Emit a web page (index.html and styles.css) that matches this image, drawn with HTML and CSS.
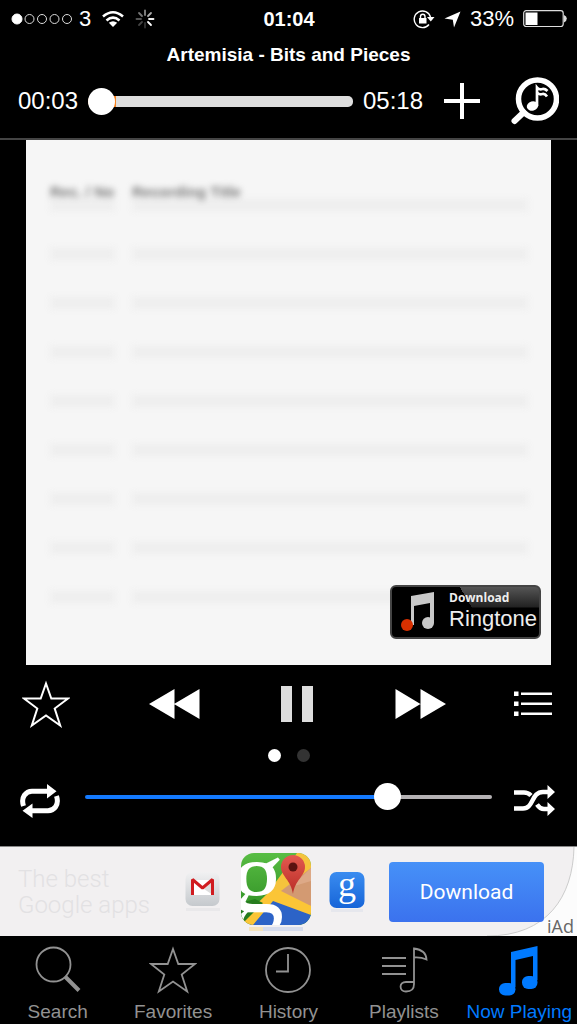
FILE: index.html
```html
<!DOCTYPE html>
<html lang="en">
<head>
    <meta charset="UTF-8">
    <meta name="viewport" content="width=device-width, initial-scale=1.0">
    <title>Now Playing</title>
    <link rel="stylesheet" href="styles.css">
</head>
<body>
    <div class="status">
        <div class="status-left">
            <svg width="62" height="12" viewBox="0 0 62 12" fill="none" stroke="#ddd">
                <circle cx="6" cy="6" r="5" fill="#fff" stroke="#fff"/>
                <circle cx="18.500" cy="6" r="4.500"/>
                <circle cx="31" cy="6" r="4.500"/>
                <circle cx="43.500" cy="6" r="4.500"/>
                <circle cx="56" cy="6" r="4.500"/>
            </svg>
            <span>3</span>
            <svg class="wifi" width="24" height="18" viewBox="0 0 24 18" fill="none" stroke="#fff" stroke-width="2.600">
                <path d="M2 6.500Q12-2 22 6.500M5.500 10.500Q12 4.800 18.500 10.500"/>
                <path d="M12 17L7.800 12.800Q12 9.600 16.200 12.800Z" fill="#fff" stroke="none"/>
            </svg>
            <svg width="20" height="20" viewBox="0 0 20 20" stroke-width="1.800" stroke-linecap="round">
                <path d="M10 6V1.500" stroke="#888"/>
                <path d="M13 7L16 4" stroke="#aaa"/>
                <path d="M14 10H18.500" stroke="#eee"/>
                <path d="M13 13L16 16" stroke="#fff"/>
                <path d="M10 14V18.500" stroke="#333"/>
                <path d="M7 13L4 16" stroke="#444"/>
                <path d="M6 10H1.500" stroke="#555"/>
                <path d="M7 7L4 4" stroke="#777"/>
            </svg>
        </div>
        <div class="clock">01:04</div>
        <div class="status-right">
            <svg width="22" height="20" viewBox="0 0 22 20" fill="none" stroke="#fff" stroke-width="1.400">
                <path d="M16 15.500A8.300 8.300 0 1 1 17.500 8"/>
                <path d="M14 8H21.500L17.800 12.500Z" fill="#fff" stroke="none"/>
                <rect x="6" y="9" width="7.500" height="5.500" fill="#fff" stroke="none"/>
                <path d="M7.500 9V7.500A2.200 2.200 0 0 1 12 7.500V9"/>
            </svg>
            <svg width="17" height="17" viewBox="0 0 17 17" fill="#fff"><path d="M16.500 0.500L10 16.500L8.800 8.700L0.500 7.500Z"/></svg>
            <span>33%</span>
            <svg width="44" height="18" viewBox="0 0 44 18" fill="none">
                <rect x="0.700" y="0.700" width="39.500" height="15.800" rx="2.500" stroke="#ddd" stroke-width="1.200"/>
                <path d="M2.500 2.500H14.500V15H2.500Z" fill="#fff"/>
                <path d="M41 5Q43.800 6 43.800 8.600Q43.800 11.500 41 12.500Z" fill="#ddd"/>
            </svg>
        </div>
    </div>

    <header>
        <h1>Artemisia - Bits and Pieces</h1>
        <div class="seek">
            <label for="seek">00:03</label>
            <input type="range" id="seek" min="0" max="318" value="0">
            <span>05:18</span>
            <button class="add" aria-label="Add to playlist">
                <svg width="36" height="36" viewBox="0 0 36 36" stroke="#fff" stroke-width="4"><path d="M0 18H36M18 0V36"/></svg>
            </button>
            <button class="find" aria-label="Find music">
                <svg width="48" height="48" viewBox="0 0 48 48" fill="none" stroke="#fff">
                    <circle cx="26.500" cy="22" r="19" stroke-width="5.500"/>
                    <path d="M12.500 35.500L3.500 44" stroke-width="6" stroke-linecap="round"/>
                    <ellipse cx="21.500" cy="29" rx="5.800" ry="4.600" fill="#fff" stroke="none" transform="rotate(-15 21.500 29)"/>
                    <path d="M26 29V10.500Q28 13 31.500 12Q34 11.500 36.500 14" stroke-width="2.700"/>
                    <path d="M26 15.500Q28 18 31.500 17Q34 16.500 36 19.500" stroke-width="2.700"/>
                </svg>
            </button>
        </div>
    </header>

    <main>
        <div class="artwork">
            <table>
                <tr><th>Rec. / No</th><th>Recording Title</th></tr>
                <tr><td></td><td></td></tr>
                <tr><td></td><td></td></tr>
                <tr><td></td><td></td></tr>
                <tr><td></td><td></td></tr>
                <tr><td></td><td></td></tr>
                <tr><td></td><td></td></tr>
                <tr><td></td><td></td></tr>
                <tr><td></td><td></td></tr>
            </table>
            <a href="#" class="ringtone">
                <svg width="36" height="40" viewBox="0 0 36 40" fill="#c8c8c8">
                    <path d="M11 4L34 0V31H30V11L14 14V33H11Z"/>
                    <circle cx="28" cy="31" r="6"/>
                    <circle cx="7" cy="33" r="6" fill="#d83000"/>
                </svg>
                <span class="ringtone-text"><small>Download</small><b>Ringtone</b></span>
            </a>
        </div>

        <div class="controls">
            <button aria-label="Favorite">
                <svg width="48" height="48" viewBox="0 0 48 48" fill="none" stroke="#fff" stroke-width="2"><path d="M24 3.500L29.300 18.500H46L32.700 28.500L38.200 45.500L24 35.500L9.800 45.500L15.300 28.500L2 18.500H18.700Z"/></svg>
            </button>
            <button aria-label="Previous">
                <svg width="51" height="32" viewBox="0 0 51 32" fill="#fff"><path d="M0 16L25.500 1V31ZM25 16L50.500 1V31Z"/></svg>
            </button>
            <button aria-label="Pause">
                <svg width="32" height="36" viewBox="0 0 32 36" fill="#ddd"><path d="M0 0H11V36H0ZM21 0H32V36H21Z"/></svg>
            </button>
            <button aria-label="Next">
                <svg width="51" height="32" viewBox="0 0 51 32" fill="#fff"><path d="M0.500 1L25.500 16L0.500 31ZM25.500 1L51 16L25.500 31Z"/></svg>
            </button>
            <button aria-label="Track list">
                <svg width="38" height="26" viewBox="0 0 38 26" fill="#fff"><path d="M0 0.500H4.500V5H0ZM0 10.500H4.500V15H0ZM0 20.500H4.500V25H0ZM7 1.500H38V4H7ZM7 11.500H38V14H7ZM7 21.500H38V24H7Z"/></svg>
            </button>
        </div>

        <div class="pages"><i class="on"></i><i></i></div>

        <div class="volume">
            <button aria-label="Repeat">
                <svg width="40" height="34" viewBox="0 0 40 34" fill="none" stroke="#fff" stroke-width="5">
                    <path d="M3.500 22C0.500 13 6 7.200 12 7.200H28"/>
                    <path d="M36.500 12C39.500 21 34 26.800 28 26.800H12"/>
                    <path d="M27 0L36.500 7.200L27 14.500ZM12.500 19.500L2.500 26.800L12.500 34Z" fill="#fff" stroke="none"/>
                </svg>
            </button>
            <input type="range" id="volume" aria-label="Volume" min="0" max="100" value="76">
            <button aria-label="Shuffle">
                <svg width="41" height="32" viewBox="0 0 41 32" fill="none" stroke="#fff" stroke-width="4.500">
                    <path d="M0 7.500H10Q14 7.500 17 10.500M23 19.500Q26 24 30 24H34"/>
                    <path d="M0 23.500H9C20 23.500 17 7 29 7H34"/>
                    <path d="M33.500 0L41 7L33.500 14ZM33.500 17L41 24L33.500 31Z" fill="#fff" stroke="none"/>
                </svg>
            </button>
        </div>
    </main>

    <section class="ad">
        <p>The best<br>Google apps</p>
        <svg class="gmail" width="36" height="42" viewBox="0 0 36 42">
            <defs>
                <linearGradient id="silver" x2="0" y2="1"><stop stop-color="#f1f1f2"/><stop offset="1" stop-color="#c5c9cd"/></linearGradient>
            </defs>
            <rect x="1" y="37" width="34" height="3" fill="#e9e8ea"/>
            <rect x="0.500" y="1" width="34" height="34" rx="7" fill="url(#silver)"/>
            <path d="M7 9H28V24H7Z" fill="#fff"/>
            <path d="M19 18L28 10V24Z" fill="#ddd"/>
            <path d="M7.500 24V8.500L17.500 17L27.500 8.500V24" fill="none" stroke="#d01c20" stroke-width="3" stroke-linejoin="bevel"/>
        </svg>
        <svg class="maps" width="70" height="78" viewBox="0 0 70 78">
            <defs>
                <clipPath id="tile"><rect width="70" height="72" rx="13"/></clipPath>
                <linearGradient id="green" x2="0" y2="1"><stop stop-color="#58bd43"/><stop offset="1" stop-color="#27851e"/></linearGradient>
                <linearGradient id="pin" x2="0" y2="1"><stop stop-color="#e35a50"/><stop offset="1" stop-color="#b92c26"/></linearGradient>
            </defs>
            <path d="M8 74H22V78H8Z" fill="#f5e4bd"/>
            <path d="M22 74H62V78H22Z" fill="#d6dced"/>
            <g clip-path="url(#tile)">
                <rect width="70" height="72" fill="url(#green)"/>
                <path d="M56 0H70V60L26 41Z" fill="#f5c33c"/>
                <path d="M70 15V53L36 41Z" fill="#d39a72"/>
                <path d="M70 15V28L50 34Z" fill="#dda987"/>
                <path d="M6 72L36 44L70 62V72Z" fill="#2c63c7"/>
                <path d="M26 41L36 36L70 53V62L32 48L12 72H0V66Z" fill="#fbc536"/>
                <path d="M0 50L14 46L22 50L2 70H0Z" fill="#267c1e"/>
                <text x="-10" y="59" class="g big">g</text>
            </g>
            <path d="M52 41C50 27 40 23 40 14A12 12 0 0 1 64 14C64 23 54 27 52 41Z" fill="url(#pin)"/>
            <circle cx="52" cy="14" r="4.500" fill="#5b1210"/>
        </svg>
        <svg class="google" width="36" height="42" viewBox="0 0 36 42">
            <defs>
                <linearGradient id="blue" x2="0" y2="1"><stop stop-color="#3a8cf0"/><stop offset="1" stop-color="#1765d8"/></linearGradient>
            </defs>
            <rect x="2" y="38" width="32" height="3" fill="#e6e7ed"/>
            <rect x="0.500" y="1" width="35" height="36" rx="7" fill="url(#blue)"/>
            <text x="9" y="25" class="g">g</text>
        </svg>
        <button class="download">Download</button>
        <svg class="curl" width="90" height="89" viewBox="0 0 90 89"><path d="M90 0V89H0C60 89 86 50 87 0Z" fill="#fcfcfc"/><path d="M0 89C60 89 86 50 87 0" fill="none" stroke="#ccc"/></svg>
        <span class="iad">iAd</span>
    </section>

    <nav>
        <a href="#">
            <svg width="48" height="50" viewBox="0 0 48 50" fill="none" stroke="#929292" stroke-width="1.800">
                <circle cx="19.500" cy="18.500" r="17"/>
                <path d="M31 30.500L45 44.500" stroke-width="4"/>
            </svg>
            Search
        </a>
        <a href="#">
            <svg width="48" height="50" viewBox="0 0 48 50" fill="none" stroke="#929292" stroke-width="1.800"><path d="M24 3L29.300 18H46L32.700 28.500L38.200 45.500L24 35.500L9.800 45.500L15.300 28.500L2 18H18.700Z"/></svg>
            Favorites
        </a>
        <a href="#">
            <svg width="48" height="50" viewBox="0 0 48 50" fill="none" stroke="#929292" stroke-width="1.800">
                <circle cx="24" cy="24" r="22"/>
                <path d="M24 8V25.500H12"/>
            </svg>
            History
        </a>
        <a href="#">
            <svg width="48" height="50" viewBox="0 0 48 50" fill="none" stroke="#929292" stroke-width="1.800">
                <path d="M2 12H26M2 20H26M2 28H26"/>
                <path d="M34 36H26C18.500 36 19 45.500 26 45.500C31 45.500 34 44 34 38V2.500Q46 4 46.500 13.500Q41 11 34 11.500"/>
            </svg>
            Playlists
        </a>
        <a href="#" class="active">
            <svg width="48" height="50" viewBox="0 0 48 50" fill="#007aff">
                <path d="M16 6L42.500 0V34H38V10L20.500 14V41H16Z"/>
                <rect x="4" y="37" width="16.500" height="12.500" rx="6.200"/>
                <rect x="27" y="30" width="15.500" height="13" rx="6.200"/>
            </svg>
            Now Playing
        </a>
    </nav>
</body>
</html>
```
FILE: styles.css
```css
* {
    box-sizing: border-box;
}

body {
    margin: 0;
    background-color: #000;
    color: #fff;
    font-family: "Liberation Sans", Arial, sans-serif;
}

svg {
    display: block;
    flex: none;
}

button {
    padding: 0;
    border: none;
    background: none;
    color: inherit;
    cursor: pointer;
}

a {
    text-decoration: none;
}

/* Status bar */
.status {
    display: grid;
    grid-template-columns: 1fr auto 1fr;
    align-items: center;
    height: 38px;
    padding: 0 10px 0 11px;
    font-size: 22px;
}

.status-left,
.status-right {
    display: flex;
    align-items: center;
}

.status-left {
    gap: 10px;
}

.status-left span {
    margin-left: -4px;
}

.status-right {
    justify-content: flex-end;
    gap: 9px;
}

.clock {
    font-size: 20px;
    font-weight: bold;
}

/* Song title and seek bar */
header {
    border-bottom: 2px solid #444;
}

h1 {
    margin: 0;
    font-size: 19px;
    line-height: 34px;
    text-align: center;
}

.seek {
    display: flex;
    align-items: center;
    height: 66px;
    padding: 0 18px 8px;
    font-size: 24px;
}

.seek input {
    flex: 1;
    margin: 0 10px;
}

.add {
    margin: 0 31px 0 21px;
}

/* Sliders */
input[type="range"] {
    appearance: none;
    min-width: 0;
    height: 28px;
    background: none;
}

input::-webkit-slider-runnable-track {
    height: 4px;
    border-radius: 2px;
    background: linear-gradient(to right, #147aff 75%, #b5b2b4 75%);
}

input::-webkit-slider-thumb {
    appearance: none;
    width: 27px;
    height: 27px;
    margin-top: -12px;
    border-radius: 50%;
    background-color: #fff;
}

#seek::-webkit-slider-runnable-track {
    height: 11px;
    border-radius: 5px;
    background: linear-gradient(to right, #f58220 28px, #dedede 28px);
}

#seek::-webkit-slider-thumb {
    margin-top: -8px;
}

/* Artwork */
.artwork {
    position: relative;
    margin: 0 26px;
    padding: 22px 6px 0 7px;
    aspect-ratio: 1;
    background-color: #f6f6f6;
}

.artwork table {
    width: 100%;
    table-layout: fixed;
    border-spacing: 17px 0;
    filter: blur(3px);
}

.artwork th,
.artwork td {
    height: 49px;
    padding: 0;
    border-bottom: 12px solid #eee;
}

.artwork th {
    color: #777;
    font-size: 15px;
    line-height: 14px;
    text-align: left;
    vertical-align: bottom;
    white-space: nowrap;
}

.artwork th:first-child {
    width: 65px;
}

.ringtone {
    position: absolute;
    right: 10px;
    bottom: 26px;
    display: flex;
    align-items: center;
    gap: 13px;
    width: 151px;
    height: 54px;
    padding-left: 8px;
    border: 2px solid #444;
    border-radius: 6px;
    background: linear-gradient(60deg, #000 55%, transparent 55%), linear-gradient(#555, #222 40%, #000 42%);
    color: #eee;
}

.ringtone-text small {
    display: block;
    font: bold 12px/14px "Open Sans", sans-serif;
}

.ringtone-text b {
    display: block;
    font: 22px/28px "Liberation Sans Narrow", "Liberation Sans", sans-serif;
}

/* Playback buttons */
.controls {
    display: grid;
    grid-template-columns: 92fr 165fr 80fr 167fr 58fr;
    align-items: center;
    justify-items: center;
    height: 78px;
    padding-right: 15px;
}

.pages {
    display: flex;
    justify-content: center;
    gap: 16px;
    padding: 6px 0;
}

.pages i {
    width: 13px;
    height: 13px;
    border-radius: 50%;
    background-color: #333;
}

.pages .on {
    background-color: #fff;
}

.volume {
    display: flex;
    align-items: center;
    height: 78px;
    padding: 0 22px 12px 20px;
}

.volume input {
    flex: 1;
    margin: 0 22px 8px 25px;
}

/* Banner */
.ad {
    position: relative;
    display: flex;
    align-items: center;
    height: 90px;
    padding: 0 33px 0 18px;
    border-top: 1px solid #888;
    background-color: #f2f0f1;
}

.ad p {
    flex: 1;
    margin: 0;
    color: #e2e1e3;
    font: 300 24px/26px Roboto, sans-serif;
}

.maps {
    margin: 0 18px 0 20px;
}

.g {
    fill: #fff;
    font: 36px "Liberation Serif", serif;
}

.big {
    font-size: 106px;
}

.google {
    overflow: visible;
}

.download {
    position: relative;
    z-index: 1;
    width: 155px;
    height: 60px;
    margin-left: 24px;
    border-radius: 4px;
    background: linear-gradient(#4691f8, #3b72ee);
    font: 21px Roboto, sans-serif;
}

.curl {
    position: absolute;
    right: 0;
    bottom: 0;
}

.iad {
    position: absolute;
    right: 3px;
    bottom: 0;
    color: #666;
    font: 18px/20px "Open Sans", sans-serif;
}

/* Tab bar */
nav {
    display: grid;
    grid-template-columns: repeat(5, 1fr);
    height: 88px;
    padding-top: 10px;
}

nav a {
    display: flex;
    flex-direction: column;
    align-items: center;
    gap: 5px;
    color: #929292;
    font-size: 19px;
    line-height: 22px;
    white-space: nowrap;
}

nav .active {
    color: #007aff;
}
```
